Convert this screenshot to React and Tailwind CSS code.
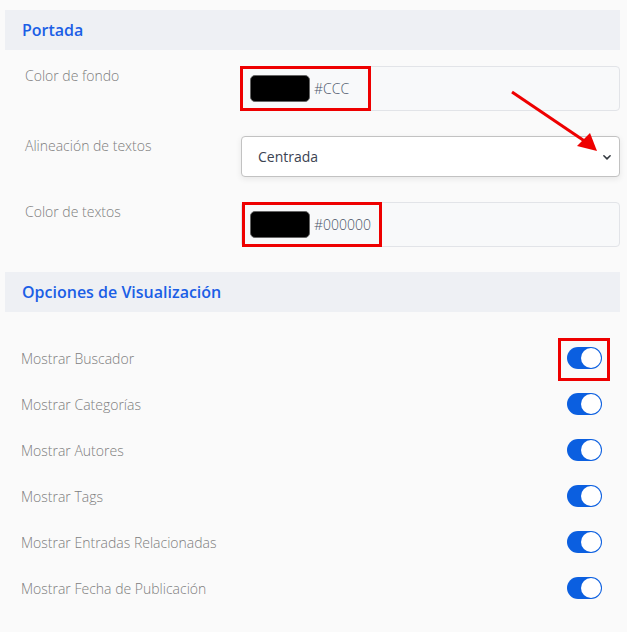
import React from 'react';

const toggles = [
  'Mostrar Buscador',
  'Mostrar Categorías',
  'Mostrar Autores',
  'Mostrar Tags',
  'Mostrar Entradas Relacionadas',
  'Mostrar Fecha de Publicación',
];

function SectionHeader({ children }) {
  return (
    <div className="ml-[5px] mr-[7px] h-[40px] bg-[#eef0f4] flex items-center px-[17px] text-[16px] font-semibold text-[#1b5fe6]">
      {children}
    </div>
  );
}

function ColorField({ value, boxClass }) {
  return (
    <div className="h-[45px] flex-1 border border-[#e2e4e8] bg-[#f8f9fa] rounded-[4px] flex items-stretch">
      <div className={`border-[3px] border-[#ee0000] flex items-center -my-px ${boxClass}`}>
        <div className="w-[60px] h-[27px] rounded-[5px] bg-black border border-[#666]" />
        <span className="ml-[4px] text-[14px] font-light text-[#4a5568]">{value}</span>
      </div>
    </div>
  );
}

function Toggle() {
  return (
    <div className="w-[35px] h-[22px] rounded-full bg-[#0b5fe0] flex items-center justify-end pr-[1px]">
      <div className="w-[20px] h-[20px] rounded-full bg-white" />
    </div>
  );
}

export default function App() {
  return (
    <div className="relative w-full min-h-[632px] bg-[#fafafa] pt-[10px] font-['Open_Sans',sans-serif]">
      <SectionHeader>Portada</SectionHeader>

      {/* Portada fields */}
      <div className="ml-[25px] mr-[7px] pt-[16px] flex flex-col gap-[25px]">
        <div className="flex items-start">
          <div className="w-[215px] text-[14px] leading-[20px] font-light text-[#7d7d7d]">Color de fondo</div>
          <ColorField value="#CCC" boxClass="w-[131px] -ml-px pl-[7px]" />
        </div>
        <div className="flex items-start">
          <div className="w-[216px] text-[14px] leading-[20px] font-light text-[#7d7d7d]">Alineación de textos</div>
          <div className="flex-1 h-[41px] bg-white border border-[#c2c2c2] rounded-[4px] shadow-[0_2px_6px_rgba(0,0,0,0.08)] flex items-center justify-between pl-[16px] pr-[7px]">
            <span className="text-[14px] text-[#3c4352]">Centrada</span>
            <svg width="10" height="10" viewBox="0 0 16 16" fill="none" stroke="#343a40" strokeWidth="2.5" strokeLinecap="round" strokeLinejoin="round">
              <path d="M3 6l5 5 5-5" />
            </svg>
          </div>
        </div>
        <div className="flex items-start">
          <div className="w-[216px] text-[14px] leading-[20px] font-light text-[#7d7d7d]">Color de textos</div>
          <ColorField value="#000000" boxClass="w-[140px] pl-[5px]" />
        </div>
      </div>

      <div className="h-[25px]" />
      <SectionHeader>Opciones de Visualización</SectionHeader>

      {/* Display options */}
      <div className="ml-[21px] mr-[25px] pt-[23px]">
        {toggles.map((label, i) => (
          <div key={label} className="h-[46px] flex items-center justify-between">
            <span className="text-[14px] font-light text-[#7d7d7d]">{label}</span>
            {i === 0 ? (
              <div className="relative">
                <Toggle />
                <div className="absolute -left-[9px] -right-[8px] -top-[9px] -bottom-[12px] border-[3px] border-[#ee0000]" />
              </div>
            ) : (
              <Toggle />
            )}
          </div>
        ))}
      </div>

      {/* annotation arrow */}
      <svg className="absolute left-0 top-0 pointer-events-none" width="627" height="632">
        <line x1="512" y1="92" x2="586" y2="142" stroke="#ee0000" strokeWidth="3" />
        <polygon points="597,151 577,146 590,133" fill="#ee0000" />
      </svg>
    </div>
  );
}
